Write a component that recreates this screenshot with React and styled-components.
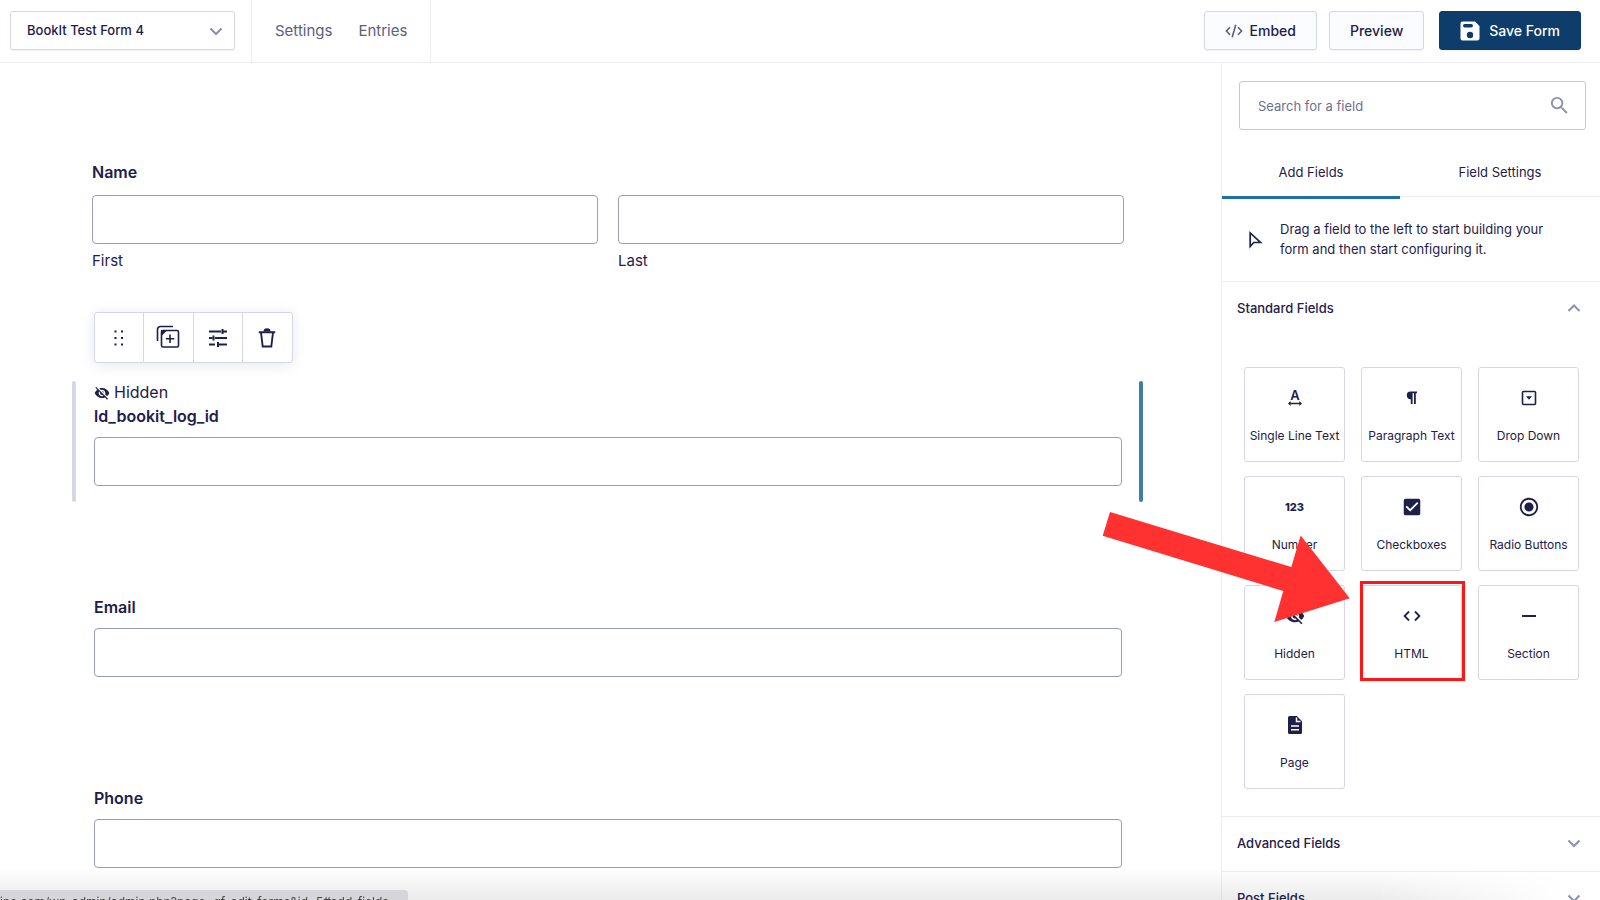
import React from 'react';
import styled, { createGlobalStyle } from 'styled-components';
import { MdSearch, MdCheckBox, MdRadioButtonChecked, MdVisibilityOff } from 'react-icons/md';

const GlobalStyle = createGlobalStyle`
  * { box-sizing: border-box; }
  body {
    margin: 0;
    background: #fff;
    color: #1e2049;
    font-family: Inter, "Liberation Sans", sans-serif;
    overflow: hidden;
  }
  button, input, select { font-family: inherit; color: inherit; }
  svg { display: block; flex-shrink: 0; overflow: visible; }
`;

const Page = styled.div`
  display: flex;
  flex-direction: column;
  height: 100vh;
  overflow: hidden;
`;

/* ---------- top bar ---------- */

const TopBar = styled.header`
  display: flex;
  justify-content: space-between;
  flex-shrink: 0;
  height: 63px;
  border-bottom: 1px solid #ecedf8;
`;

const TopLeft = styled.div`
  display: flex;
  padding-left: 10px;
`;

const FormPicker = styled.label`
  display: grid;
  align-items: center;
  align-self: flex-start;
  width: 225px;
  height: 39px;
  margin: 11px 16px 0 0;

  > * { grid-area: 1 / 1; }
  > svg { justify-self: end; margin-right: 12px; pointer-events: none; }
`;

const PickerSelect = styled.select`
  appearance: none;
  width: 100%;
  height: 100%;
  padding: 0 36px 2px 16px;
  border: 1px solid #d5d7e9;
  border-radius: 3px;
  background: #fff;
  box-shadow: 0 1px 1px rgba(18, 25, 97, 0.06);
  font-size: 13px;
  font-weight: 500;
`;

const TopNav = styled.nav`
  display: flex;
  align-items: center;
  gap: 26px;
  padding: 0 23px 1px;
  border: solid #ecedf8;
  border-width: 0 1px;
`;

const NavLink = styled.a`
  color: #5b5e80;
  font-size: 15px;
  line-height: 20px;
  text-decoration: none;
`;

const Actions = styled.div`
  display: flex;
  align-items: flex-start;
  gap: 12px;
  padding: 11px 19px 0 0;
`;

const ActionButton = styled.button`
  display: flex;
  align-items: center;
  justify-content: center;
  gap: ${props => (props.$primary ? 9 : 7)}px;
  height: 39px;
  padding: 0 20px;
  margin-left: ${props => (props.$primary ? 3 : 0)}px;
  border: 1px solid ${props => (props.$primary ? '#0e3c6b' : '#d5d7e9')};
  border-radius: 3px;
  background: ${props => (props.$primary ? '#0e3c6b' : '#fbfcff')};
  color: ${props => (props.$primary ? '#fff' : 'inherit')};
  box-shadow: 0 1px 1px rgba(18, 25, 97, 0.06);
  font-size: 14px;
  font-weight: 500;
`;

/* ---------- form canvas ---------- */

const Body = styled.div`
  display: flex;
  flex: 1;
  min-height: 0;
  overflow: hidden;
`;

const Canvas = styled.main`
  flex: 1;
  min-width: 0;
  padding: 97px 78px 0 72px;
`;

const FieldLabel = styled.label`
  display: block;
  width: fit-content;
  margin-bottom: ${props => (props.$complex ? 11 : 9)}px;
  font-size: 16px;
  font-weight: 600;
  line-height: 24px;
`;

const Field = styled.div`
  padding: ${props => (props.$complex ? '0 19px 0 20px' : '0 21px 16px 22px')};
  margin-bottom: ${props => (props.$complex ? 41 : 93)}px;
`;

const TextInput = styled.input`
  display: block;
  width: 100%;
  height: 49px;
  padding: 0 12px;
  border: 1px solid #9b9dbd;
  border-radius: 4px;
  background: #fff;
  font-size: 15px;
`;

const NameParts = styled.div`
  display: grid;
  grid-template-columns: 1fr 1fr;
  gap: 20px;
`;

const SubLabel = styled.label`
  display: block;
  margin-top: 7px;
  font-size: 15px;
  line-height: 20px;
`;

const FieldToolbar = styled.div`
  display: grid;
  grid-template-columns: repeat(4, 1fr);
  width: 199px;
  height: 51px;
  margin: 0 0 18px 22px;
  border: 1px solid #d5d7e9;
  border-radius: 3px;
  background: #fff;
  box-shadow: 0 2px 14px rgba(18, 25, 97, 0.1);
`;

const ToolButton = styled.button`
  display: flex;
  align-items: center;
  justify-content: center;
  padding: 0;
  border: 0;
  border-right: 1px solid #d5d7e9;
  background: none;

  &:last-child { border-right: 0; }
`;

const SelectedField = styled.div`
  display: flex;
  margin-bottom: 93px;
`;

const Edge = styled.span`
  flex: 0 0 4px;
  border-radius: 2px;
  background: ${props => props.color};
`;

const SelectedContent = styled.div`
  flex: 1;
  padding: 0 17px 16px 18px;
`;

const HiddenTag = styled.div`
  display: flex;
  align-items: center;
  gap: 4px;
  font-size: 16px;
  line-height: 23px;
`;

/* ---------- sidebar ---------- */

const Sidebar = styled.aside`
  flex: 0 0 379px;
  border-left: 1px solid #ecedf8;
`;

const SearchBox = styled.label`
  display: flex;
  align-items: center;
  height: 49px;
  margin: 18px 14px 0 17px;
  padding: 0 14px 0 18px;
  border: 1px solid #c5c6df;
  border-radius: 3px;
  color: #8c8eb4;
`;

const SearchInput = styled.input`
  flex: 1;
  min-width: 0;
  padding: 0;
  border: 0;
  outline: 0;
  background: none;
  font-size: 13px;

  &::placeholder { color: #6d6f92; opacity: 1; }
`;

const Tabs = styled.div`
  display: grid;
  grid-template-columns: 89fr 100fr;
  height: 49px;
  margin-top: 18px;
  border-bottom: 1px solid #ecedf8;
`;

const Tab = styled.button`
  position: relative;
  padding: 0;
  border: 0;
  background: none;
  font-size: 13px;

  &[aria-selected='true']::after {
    content: '';
    position: absolute;
    top: 100%;
    left: 0;
    right: 0;
    height: 3px;
    background: #1c72a6;
  }
`;

const Hint = styled.p`
  display: flex;
  align-items: center;
  gap: 18px;
  margin: 0;
  padding: 22px 42px 22px 27px;
  font-size: 13px;
  line-height: 20px;
`;

const GroupHeader = styled.button`
  display: flex;
  align-items: center;
  justify-content: space-between;
  width: 100%;
  height: 55px;
  padding: 0 19px 3px 15px;
  border: 0;
  border-top: 1px solid #ecedf8;
  background: none;
  font-size: 13px;
  font-weight: 500;
`;

const CardGrid = styled.div`
  display: grid;
  grid-template-columns: repeat(3, 1fr);
  gap: 14px 16px;
  padding: 31px 21px 27px 22px;
`;

const Slot = styled.div`
  position: relative;
`;

const Card = styled.button`
  display: flex;
  flex-direction: column;
  align-items: center;
  gap: 17px;
  width: 100%;
  height: 95px;
  padding: 19px 0 0;
  border: 1px solid #d5d7e9;
  border-radius: 3px;
  background: #fff;
  font-size: 12px;
  line-height: 20px;
  white-space: nowrap;
`;

const CardIcon = styled.span`
  display: flex;
  align-items: center;
  justify-content: center;
  height: 22px;
  font-size: 11px;
  font-weight: 800;
`;

/* red frame and arrow that point out one card */
const Highlight = styled.span`
  position: absolute;
  inset: -4px -3px -1px -1px;
  border: 3px solid #ff1616;
  pointer-events: none;
`;

const Arrow = styled.svg`
  position: absolute;
  top: -74px;
  right: calc(100% + 11px);
  z-index: 2;
  pointer-events: none;
`;

/* ---------- bottom of the window ---------- */

const BottomShade = styled.div`
  position: fixed;
  left: 0;
  right: 0;
  bottom: 0;
  height: 32px;
  background: linear-gradient(rgba(0, 0, 0, 0), rgba(0, 0, 0, 0.08));
  mask-image: linear-gradient(to right, #000 86%, transparent 98%);
  pointer-events: none;
`;

const StatusLink = styled.div`
  position: fixed;
  left: 0;
  bottom: 0;
  min-width: 408px;
  height: 10px;
  padding: 5px 8px 0 0;
  border-radius: 0 4px 0 0;
  background: #d6d6da;
  color: #444;
  font-size: 12px;
  line-height: 14px;
  white-space: nowrap;
`;

const Chevron = ({ up }) => (
  <svg width="14" height="14" viewBox="0 0 14 14" fill="none" stroke="#8c8eb4" strokeWidth="2">
    <path d={up ? 'M1.5 10 7 4.5 12.5 10' : 'M1.5 4.5 7 10 12.5 4.5'} />
  </svg>
);

const EmbedIcon = () => (
  <svg width="18" height="14" viewBox="0 0 18 14" fill="none" stroke="#5b5e80" strokeWidth="1.6">
    <path d="M5 3.2 1.4 7 5 10.8M13 3.2 16.6 7 13 10.8M10.8.8 7.2 13.2" />
  </svg>
);

const SaveIcon = () => (
  <svg width="20" height="20" viewBox="0 0 20 20">
    <path fill="#fff" d="M2.5.5h12.500L19.500 5v12a2.500 2.500 0 0 1-2.500 2.500H2.500A2 2 0 0 1 .5 17.500v-15a2 2 0 0 1 2-2z" />
    <rect x="3" y="3" width="10" height="3.400" rx="1.700" fill="#0e3c6b" />
    <circle cx="10" cy="14" r="3.200" fill="#0e3c6b" />
  </svg>
);

const DragIcon = () => (
  <svg width="12" height="18" viewBox="0 0 12 18" fill="#1e2049">
    {[2.5, 9, 15.5].map(y => (
      <React.Fragment key={y}>
        <rect x="1.500" y={y - 1} width="2" height="2" />
        <rect x="8" y={y - 1} width="2" height="2" />
      </React.Fragment>
    ))}
  </svg>
);

const DuplicateIcon = () => (
  <svg width="24" height="24" viewBox="0 0 24 24" fill="none" stroke="#1e2049" strokeWidth="1.600">
    <path d="M1.500 15V3.500a3 3 0 0 1 3-3H17" />
    <rect x="5.500" y="4.500" width="17" height="16.500" rx="1.500" />
    <path d="M14 8.500v8.500M9.800 12.800h8.500" />
    <path d="M5 4h6.500L5 10.500z" fill="#1e2049" stroke="none" />
  </svg>
);

const SlidersIcon = () => (
  <svg width="20" height="20" viewBox="0 0 20 20" fill="none" stroke="#1e2049" strokeWidth="1.800">
    <path d="M1 3.500h12M15 3.500h4M1 10h3.500M7 10h12M1 16.500h6M11 16.500h8" />
    <path d="M14.500 1v5M5.500 7.500v5M10 14v5" strokeWidth="2" />
  </svg>
);

const TrashIcon = () => (
  <svg width="18" height="20" viewBox="0 0 18 20" fill="none" stroke="#1e2049" strokeWidth="1.900">
    <path d="M.8 4.200h16.400M3 4.500 4.700 18.500h8.600L15 4.500" />
    <path d="M5.500 3.500a3.500 3.200 0 0 1 7 0z" fill="#1e2049" stroke="none" />
  </svg>
);

const CursorIcon = () => (
  <svg width="13" height="16" viewBox="0 0 13 16" fill="none" stroke="#1e2049" strokeWidth="1.700">
    <path d="M1.200 2v13.500l3.500-4h6.800z" />
  </svg>
);

const TextIcon = () => (
  <svg width="16" height="18" viewBox="0 0 16 18" fill="#1e2049">
    <text x="8" y="11" textAnchor="middle" fontSize="13" fontWeight="600" fontFamily="Inter, sans-serif">A</text>
    <path d="M1 14.500 3.600 12v1.700h8.800V12L15 14.500 12.400 17v-1.700H3.600V17z" />
  </svg>
);

const ParagraphIcon = () => (
  <svg width="12" height="16" viewBox="0 0 12 16" fill="#1e2049">
    <path d="M4.500 1.500H11V3.300H9.800V14H8V3.300H6.600V14H4.800V9.200A3.850 3.850 0 0 1 4.500 1.500z" />
  </svg>
);

const DropDownIcon = () => (
  <svg width="16" height="16" viewBox="0 0 16 16" fill="#1e2049">
    <rect x="1.500" y="1.500" width="13" height="13" rx="1" fill="none" stroke="#1e2049" strokeWidth="1.600" />
    <path d="M5 6.300h6L8 9.800z" />
  </svg>
);

const HtmlIcon = () => (
  <svg width="18" height="12" viewBox="0 0 18 12" fill="none" stroke="#1e2049" strokeWidth="1.800">
    <path d="M6 1.500 1.600 6 6 10.500M12 1.500 16.400 6 12 10.500" />
  </svg>
);

const SectionIcon = () => (
  <svg width="14" height="2" viewBox="0 0 14 2"><rect width="14" height="2" fill="#1e2049" /></svg>
);

const PageIcon = () => (
  <svg width="16" height="20" viewBox="0 0 16 20">
    <path fill="#1e2049" d="M2.500 1h7.300L15 6.300V17.500a1.500 1.500 0 0 1-1.500 1.500h-11A1.500 1.500 0 0 1 1 17.500v-15A1.500 1.500 0 0 1 2.500 1z" />
    <path d="M9.500 2.500v4h4M4 11h8M4 14.800h8" fill="none" stroke="#fff" strokeWidth="1.500" />
  </svg>
);

const standardFields = [
  { name: 'Single Line Text', icon: <TextIcon /> },
  { name: 'Paragraph Text', icon: <ParagraphIcon /> },
  { name: 'Drop Down', icon: <DropDownIcon /> },
  { name: 'Number', icon: '123' },
  { name: 'Checkboxes', icon: <MdCheckBox size={22} /> },
  { name: 'Radio Buttons', icon: <MdRadioButtonChecked size={22} /> },
  { name: 'Hidden', icon: <MdVisibilityOff size={20} /> },
  { name: 'HTML', icon: <HtmlIcon />, highlighted: true },
  { name: 'Section', icon: <SectionIcon /> },
  { name: 'Page', icon: <PageIcon /> },
];

const tools = [
  { name: 'Move', icon: <DragIcon /> },
  { name: 'Duplicate', icon: <DuplicateIcon /> },
  { name: 'Settings', icon: <SlidersIcon /> },
  { name: 'Delete', icon: <TrashIcon /> },
];

const Header = () => (
  <TopBar>
    <TopLeft>
      <FormPicker>
        <PickerSelect aria-label="Form">
          <option>BookIt Test Form 4</option>
        </PickerSelect>
        <Chevron />
      </FormPicker>
      <TopNav>
        <NavLink href="#settings">Settings</NavLink>
        <NavLink href="#entries">Entries</NavLink>
      </TopNav>
    </TopLeft>
    <Actions>
      <ActionButton><EmbedIcon />Embed</ActionButton>
      <ActionButton>Preview</ActionButton>
      <ActionButton $primary><SaveIcon />Save Form</ActionButton>
    </Actions>
  </TopBar>
);

const FormCanvas = () => (
  <Canvas>
    <Field $complex>
      <FieldLabel $complex htmlFor="first">Name</FieldLabel>
      <NameParts>
        <div>
          <TextInput id="first" />
          <SubLabel htmlFor="first">First</SubLabel>
        </div>
        <div>
          <TextInput id="last" />
          <SubLabel htmlFor="last">Last</SubLabel>
        </div>
      </NameParts>
    </Field>

    <FieldToolbar>
      {tools.map(tool => (
        <ToolButton key={tool.name} aria-label={tool.name}>{tool.icon}</ToolButton>
      ))}
    </FieldToolbar>
    <SelectedField>
      <Edge color="#d5d7e9" />
      <SelectedContent>
        <HiddenTag><MdVisibilityOff size={16} />Hidden</HiddenTag>
        <FieldLabel htmlFor="log-id">ld_bookit_log_id</FieldLabel>
        <TextInput id="log-id" />
      </SelectedContent>
      <Edge color="#3e7da6" />
    </SelectedField>

    <Field>
      <FieldLabel htmlFor="email">Email</FieldLabel>
      <TextInput id="email" />
    </Field>
    <Field>
      <FieldLabel htmlFor="phone">Phone</FieldLabel>
      <TextInput id="phone" />
    </Field>
  </Canvas>
);

const FieldsPanel = () => (
  <Sidebar>
    <SearchBox>
      <SearchInput placeholder="Search for a field" aria-label="Search for a field" />
      <MdSearch size={23} />
    </SearchBox>
    <Tabs role="tablist">
      <Tab role="tab" aria-selected="true">Add Fields</Tab>
      <Tab role="tab" aria-selected="false">Field Settings</Tab>
    </Tabs>
    <Hint>
      <CursorIcon />
      <span>Drag a field to the left to start building your form and then start configuring it.</span>
    </Hint>
    <GroupHeader>Standard Fields<Chevron up /></GroupHeader>
    <CardGrid>
      {standardFields.map(field => (
        <Slot key={field.name}>
          <Card>
            <CardIcon>{field.icon}</CardIcon>
            {field.name}
          </Card>
          {field.highlighted && (
            <>
              <Highlight />
              <Arrow width="248" height="112" viewBox="0 0 248 112">
                <path fill="#ff3131" d="M8 1 189.300 56 198.700 24.500 247.700 87.300 172.300 111 181.300 80 .7 24.700z" />
              </Arrow>
            </>
          )}
        </Slot>
      ))}
    </CardGrid>
    <GroupHeader>Advanced Fields<Chevron /></GroupHeader>
    <GroupHeader>Post Fields<Chevron /></GroupHeader>
  </Sidebar>
);

const App = () => (
  <Page>
    <GlobalStyle />
    <Header />
    <Body>
      <FormCanvas />
      <FieldsPanel />
    </Body>
    <BottomShade />
    <StatusLink>ine.com/wp-admin/admin.php?page=gf_edit_forms&amp;id=5#add_fields</StatusLink>
  </Page>
);

export default App;
